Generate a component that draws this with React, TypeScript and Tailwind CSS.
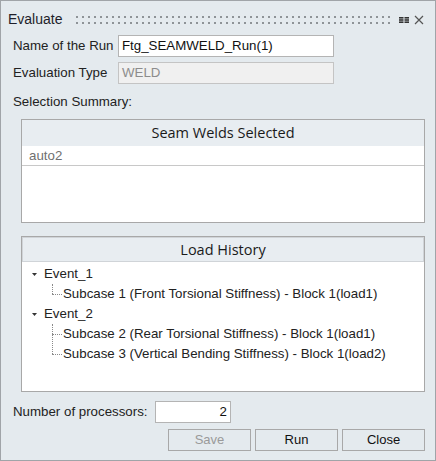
const txt = "font-[family-name:'Liberation_Sans',Arial,sans-serif] text-[13.3px] text-[#222]";
const hdr = "font-[family-name:'Open_Sans',sans-serif]";
const btn = 'h-[22px] w-[83px] border border-[#a8a8a8] bg-[#e4eaee] text-[13px]';

function Grip() {
    return (
        <svg width="314" height="8" className="block">
            <defs>
                <pattern id="dots" width="6" height="6" patternUnits="userSpaceOnUse">
                    <rect x="0" y="0" width="2" height="2" fill="#8e9397" />
                </pattern>
            </defs>
            <rect width="314" height="8" fill="url(#dots)" />
        </svg>
    );
}

function Branch({ tall }: { tall?: boolean }) {
    return (
        <span className="relative inline-block h-[20px] w-[19px] shrink-0">
            <span className={'absolute left-[8px] border-l border-dotted border-[#8a8a8a] ' + (tall ? 'top-[-10px] h-[20px]' : 'top-0 h-[10px]')} />
            <span className="absolute left-[8px] top-[10px] w-[10px] border-t border-dotted border-[#8a8a8a]" />
        </span>
    );
}

function EventRow({ name }: { name: string }) {
    return (
        <div className="flex h-[20px] items-center pl-[9px]">
            <svg width="8" height="8" className="mr-[5px]"><path d="M1 3 L6 3 L3.5 6 Z" fill="#333" /></svg>
            <span>{name}</span>
        </div>
    );
}

function SubRow({ label, tall }: { label: string; tall?: boolean }) {
    return (
        <div className="flex h-[20px] items-center pl-[22px]">
            <Branch tall={tall} />
            <span className="whitespace-nowrap">{label}</span>
        </div>
    );
}

export default function App() {
    return (
        <div className={'flex h-[461px] w-[436px] flex-col border border-[#a0a4a8] bg-[#e4eaee] ' + txt}>
            <div className="flex h-[28px] items-center pl-[7px] pr-[10px] pt-[9px]">
                <span className="w-[53px] shrink-0 text-[14px] text-[#1e1e2a]">Evaluate</span>
                <div className="ml-[15px] mt-[1px] shrink-0"><Grip /></div>
                <svg width="10" height="6" className="ml-[9px] shrink-0" fill="#333">
                    <rect x="0" y="0" width="4.5" height="1.6" /><rect x="5.5" y="0" width="4.5" height="1.6" />
                    <rect x="0" y="2.2" width="4.5" height="1.6" /><rect x="5.5" y="2.2" width="4.5" height="1.6" />
                    <rect x="0" y="4.4" width="4.5" height="1.6" /><rect x="5.5" y="4.4" width="4.5" height="1.6" />
                </svg>
                <svg width="10" height="10" className="ml-[5px] shrink-0" stroke="#555" strokeWidth="1.2"><path d="M1 1 L9 9 M9 1 L1 9" /></svg>
            </div>

            <div className="mt-[6px] flex h-[22px] items-center pl-[12px]">
                <span className="w-[105px] shrink-0 whitespace-nowrap">Name of the Run</span>
                <div className="flex h-[22px] w-[216px] items-center border border-[#b4b4b4] bg-white pl-[3px] text-[#111]">Ftg_SEAMWELD_Run(1)</div>
            </div>
            <div className="mt-[5px] flex h-[22px] items-center pl-[12px]">
                <span className="w-[105px] shrink-0 whitespace-nowrap">Evaluation Type</span>
                <div className="flex h-[22px] w-[216px] items-center border border-[#c4c4c4] bg-[#f0f0f0] pl-[3px] text-[#8c8c8c]">WELD</div>
            </div>

            <div className="mt-[8px] pl-[12px] leading-[20px]">Selection Summary:</div>

            <div className="ml-[20px] mt-[7px] flex h-[104px] w-[404px] flex-col border border-[#a8a8a8] bg-white">
                <div className={'flex h-[26px] items-center justify-center bg-[#e8edf1] text-[14.5px] text-[#1a1a1a] ' + hdr}>Seam Welds Selected</div>
                <div className="flex h-[20px] items-center border-b border-[#c8c8c8] pl-[7px] text-[#707070]">auto2</div>
            </div>

            <div className="ml-[20px] mt-[13px] flex h-[156px] w-[404px] flex-col border border-[#a8a8a8] bg-white">
                <div className={'flex h-[25px] items-center justify-center border border-[#d0d4d8] bg-[#e8edf1] text-[14.5px] text-[#1a1a1a] ' + hdr}>Load History</div>
                <div className="pt-[2px]">
                    <EventRow name="Event_1" />
                    <SubRow label="Subcase 1 (Front Torsional Stiffness) - Block 1(load1)" />
                    <EventRow name="Event_2" />
                    <SubRow label="Subcase 2 (Rear Torsional Stiffness) - Block 1(load1)" />
                    <SubRow label="Subcase 3 (Vertical Bending Stiffness) - Block 1(load2)" tall />
                </div>
            </div>

            <div className="mt-[9px] flex h-[22px] items-center pl-[12px]">
                <span className="w-[142px] shrink-0 whitespace-nowrap">Number of processors:</span>
                <div className="flex h-[22px] w-[76px] items-center justify-end border border-[#b4b4b4] bg-white pr-[3px] text-[#111]">2</div>
            </div>

            <div className="mt-[6px] flex justify-end gap-[4px] pr-[10px]">
                <button className={btn + ' text-[#9a9a9a]'}>Save</button>
                <button className={btn + ' text-[#111]'}>Run</button>
                <button className={btn + ' text-[#111]'}>Close</button>
            </div>
        </div>
    );
}
